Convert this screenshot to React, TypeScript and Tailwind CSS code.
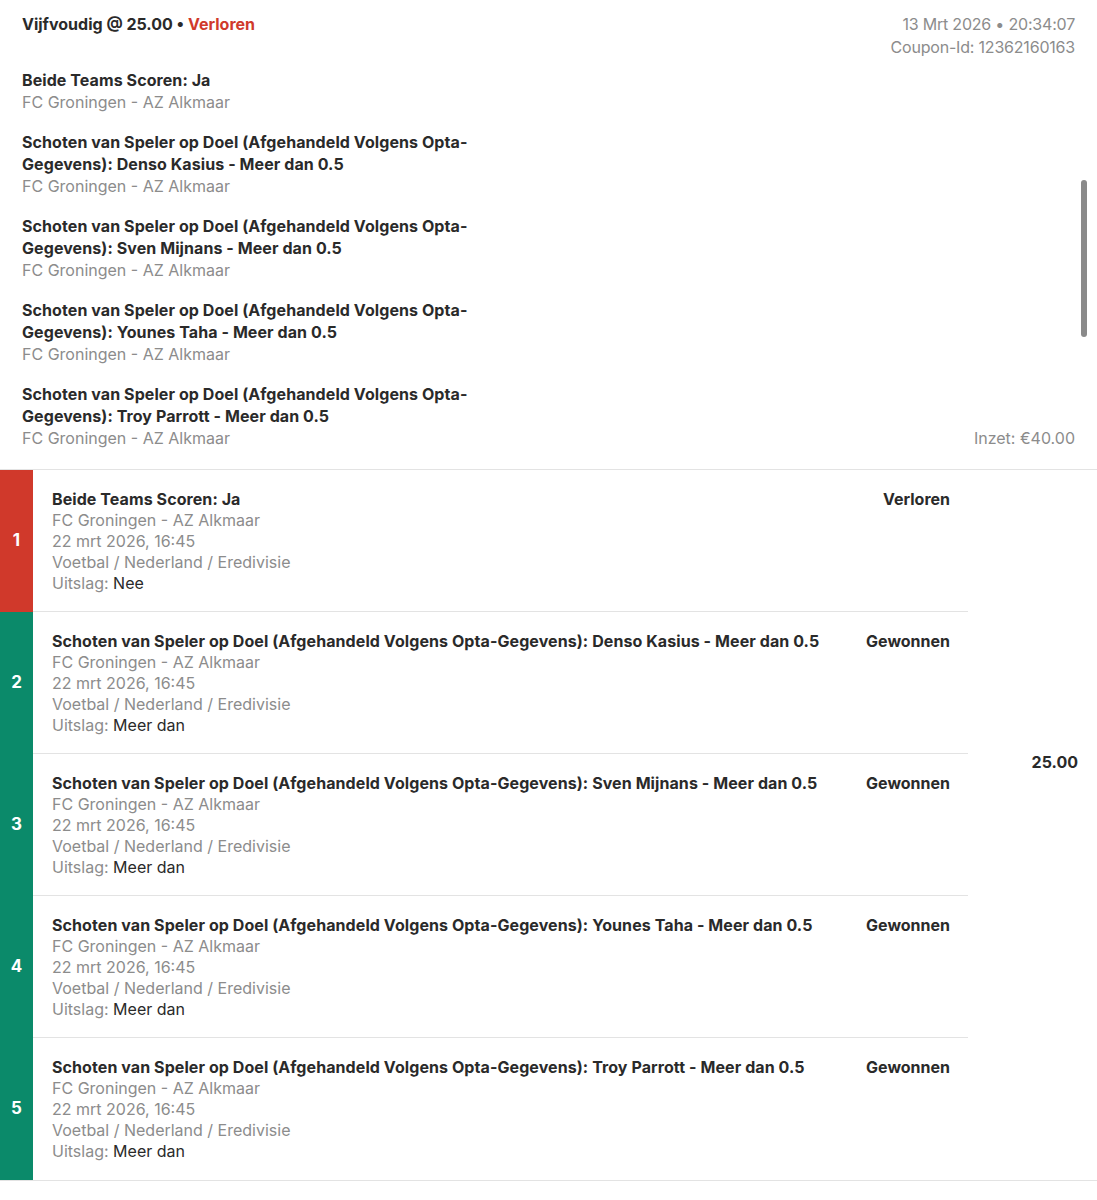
import React from "react";

const picks = [
  "Beide Teams Scoren: Ja",
  "Schoten van Speler op Doel (Afgehandeld Volgens Opta-Gegevens): Denso Kasius - Meer dan 0.5",
  "Schoten van Speler op Doel (Afgehandeld Volgens Opta-Gegevens): Sven Mijnans - Meer dan 0.5",
  "Schoten van Speler op Doel (Afgehandeld Volgens Opta-Gegevens): Younes Taha - Meer dan 0.5",
  "Schoten van Speler op Doel (Afgehandeld Volgens Opta-Gegevens): Troy Parrott - Meer dan 0.5",
];

const legs = picks.map((title, i) => ({
  title,
  lost: i === 0,
  result: i === 0 ? "Nee" : "Meer dan",
}));

export default function App() {
  return (
    <div
      className="w-[1097px] min-h-[1200px] bg-white text-[#2a2a2a]"
      style={{ fontFamily: "Inter, 'Liberation Sans', sans-serif" }}
    >
      {/* coupon header */}
      <div className="relative border-b border-[#e3e3e3] pl-[22px] pr-[22px] pt-[13px] pb-[20px]">
        <div className="flex items-start justify-between">
          <div className="text-[16px] leading-[22px] font-bold">
            Vijfvoudig @ 25.00 <span>•</span>{" "}
            <span className="text-[#d0392b]">Verloren</span>
          </div>
          <div className="text-right text-[16px] leading-[23px] text-[#8c8c8c] tracking-[-0.2px]">
            <div>13 Mrt 2026 • 20:34:07</div>
            <div>Coupon-Id: 12362160163</div>
          </div>
        </div>

        <div className="mt-[10px] flex items-end justify-between">
          <div className="flex flex-col gap-[18px]">
            {picks.map((p) => (
              <div key={p} className="max-w-[480px]">
                <div className="text-[16px] leading-[22px] font-bold tracking-[0.08px]">{p}</div>
                <div className="text-[16px] leading-[22px] text-[#8c8c8c]">FC Groningen - AZ Alkmaar</div>
              </div>
            ))}
          </div>
          <div className="text-[16px] leading-[22px] text-[#8c8c8c]">Inzet: €40.00</div>
        </div>

        <div className="absolute right-[10px] top-[180px] h-[157px] w-[6px] rounded-full bg-[#8a8a8a]" />
      </div>

      {/* legs */}
      <div className="flex border-b border-[#e3e3e3]">
        <div className="w-[968px]">
          {legs.map((leg, i) => (
            <div key={i} className="flex h-[142px]">
              <div
                className={
                  "flex w-[33px] items-center justify-center text-[17px] font-bold text-white " +
                  (leg.lost ? "bg-[#d0392b]" : "bg-[#0b8a6a]")
                }
              >
                {i + 1}
              </div>
              <div
                className={
                  "flex flex-1 justify-between pl-[19px] pr-[18px] pt-[19px] " +
                  (i < legs.length - 1 ? "border-b border-[#e3e3e3]" : "")
                }
              >
                <div className="text-[16px] leading-[21px]">
                  <div className="font-bold tracking-[0.08px]">{leg.title}</div>
                  <div className="text-[#8c8c8c]">FC Groningen - AZ Alkmaar</div>
                  <div className="text-[#8c8c8c]">22 mrt 2026, 16:45</div>
                  <div className="text-[#8c8c8c]">Voetbal / Nederland / Eredivisie</div>
                  <div>
                    <span className="text-[#8c8c8c]">Uitslag:</span> {leg.result}
                  </div>
                </div>
                <div className="text-[16px] leading-[21px] font-bold">
                  {leg.lost ? "Verloren" : "Gewonnen"}
                </div>
              </div>
            </div>
          ))}
        </div>
        <div className="flex flex-1 justify-end pr-[19px] pt-[282px]">
          <div className="text-[16px] leading-[21px] font-bold">25.00</div>
        </div>
      </div>
    </div>
  );
}
